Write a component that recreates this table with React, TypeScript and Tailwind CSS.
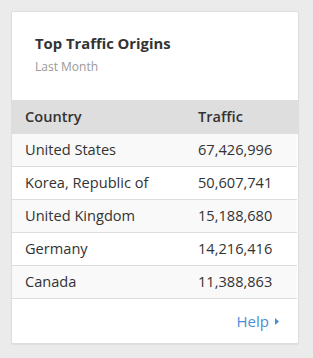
import React from "react";

const rows = [
  { country: "United States", traffic: "67,426,996" },
  { country: "Korea, Republic of", traffic: "50,607,741" },
  { country: "United Kingdom", traffic: "15,188,680" },
  { country: "Germany", traffic: "14,216,416" },
  { country: "Canada", traffic: "11,388,863" },
];

export default function App() {
  return (
    <div
      className="min-h-[358px] w-[313px] bg-[#ebebeb] pt-[11px] pl-[11px]"
      style={{ fontFamily: '"Open Sans", "Liberation Sans", sans-serif' }}
    >
      <div className="w-[288px] bg-white border border-[#dedede] rounded-[2px] shadow-[0_1px_1px_rgba(0,0,0,0.06)]">
        {/* Heading */}
        <div className="px-[23px] pt-[21px] pb-[25px]">
          <h2 className="text-[14.8px] leading-5 font-bold text-[#333]">
            Top Traffic Origins
          </h2>
          <p className="mt-[6px] text-[12px] leading-4 text-[#999]">Last Month</p>
        </div>

        {/* Table */}
        <div className="grid grid-cols-[172px_1fr] bg-[#dedede] h-[34px] items-center text-[14.6px] font-semibold text-[#333]">
          <div className="pl-[13px]">Country</div>
          <div className="pl-[14px]">Traffic</div>
        </div>
        {rows.map((r, i) => (
          <div
            key={r.country}
            className={`grid grid-cols-[172px_1fr] h-[33px] items-center border-b border-[#dedede] text-[14.6px] text-[#333] mr-px ${
              i % 2 === 0 ? "bg-[#f9f9f9]" : "bg-white"
            }`}
          >
            <div className="pl-[13px]">{r.country}</div>
            <div className="pl-[14px]">{r.traffic}</div>
          </div>
        ))}

        {/* Footer */}
        <div className="h-[44px] flex items-center justify-end pr-[19px]">
          <a href="#" className="flex items-center gap-[6px] text-[15px] text-[#4a8fd3]">
            Help
            <svg width="4" height="7" viewBox="0 0 4 7" className="mt-px">
              <path d="M0 0 L4 3.5 L0 7 Z" fill="#4a8fd3" />
            </svg>
          </a>
        </div>
      </div>
    </div>
  );
}
